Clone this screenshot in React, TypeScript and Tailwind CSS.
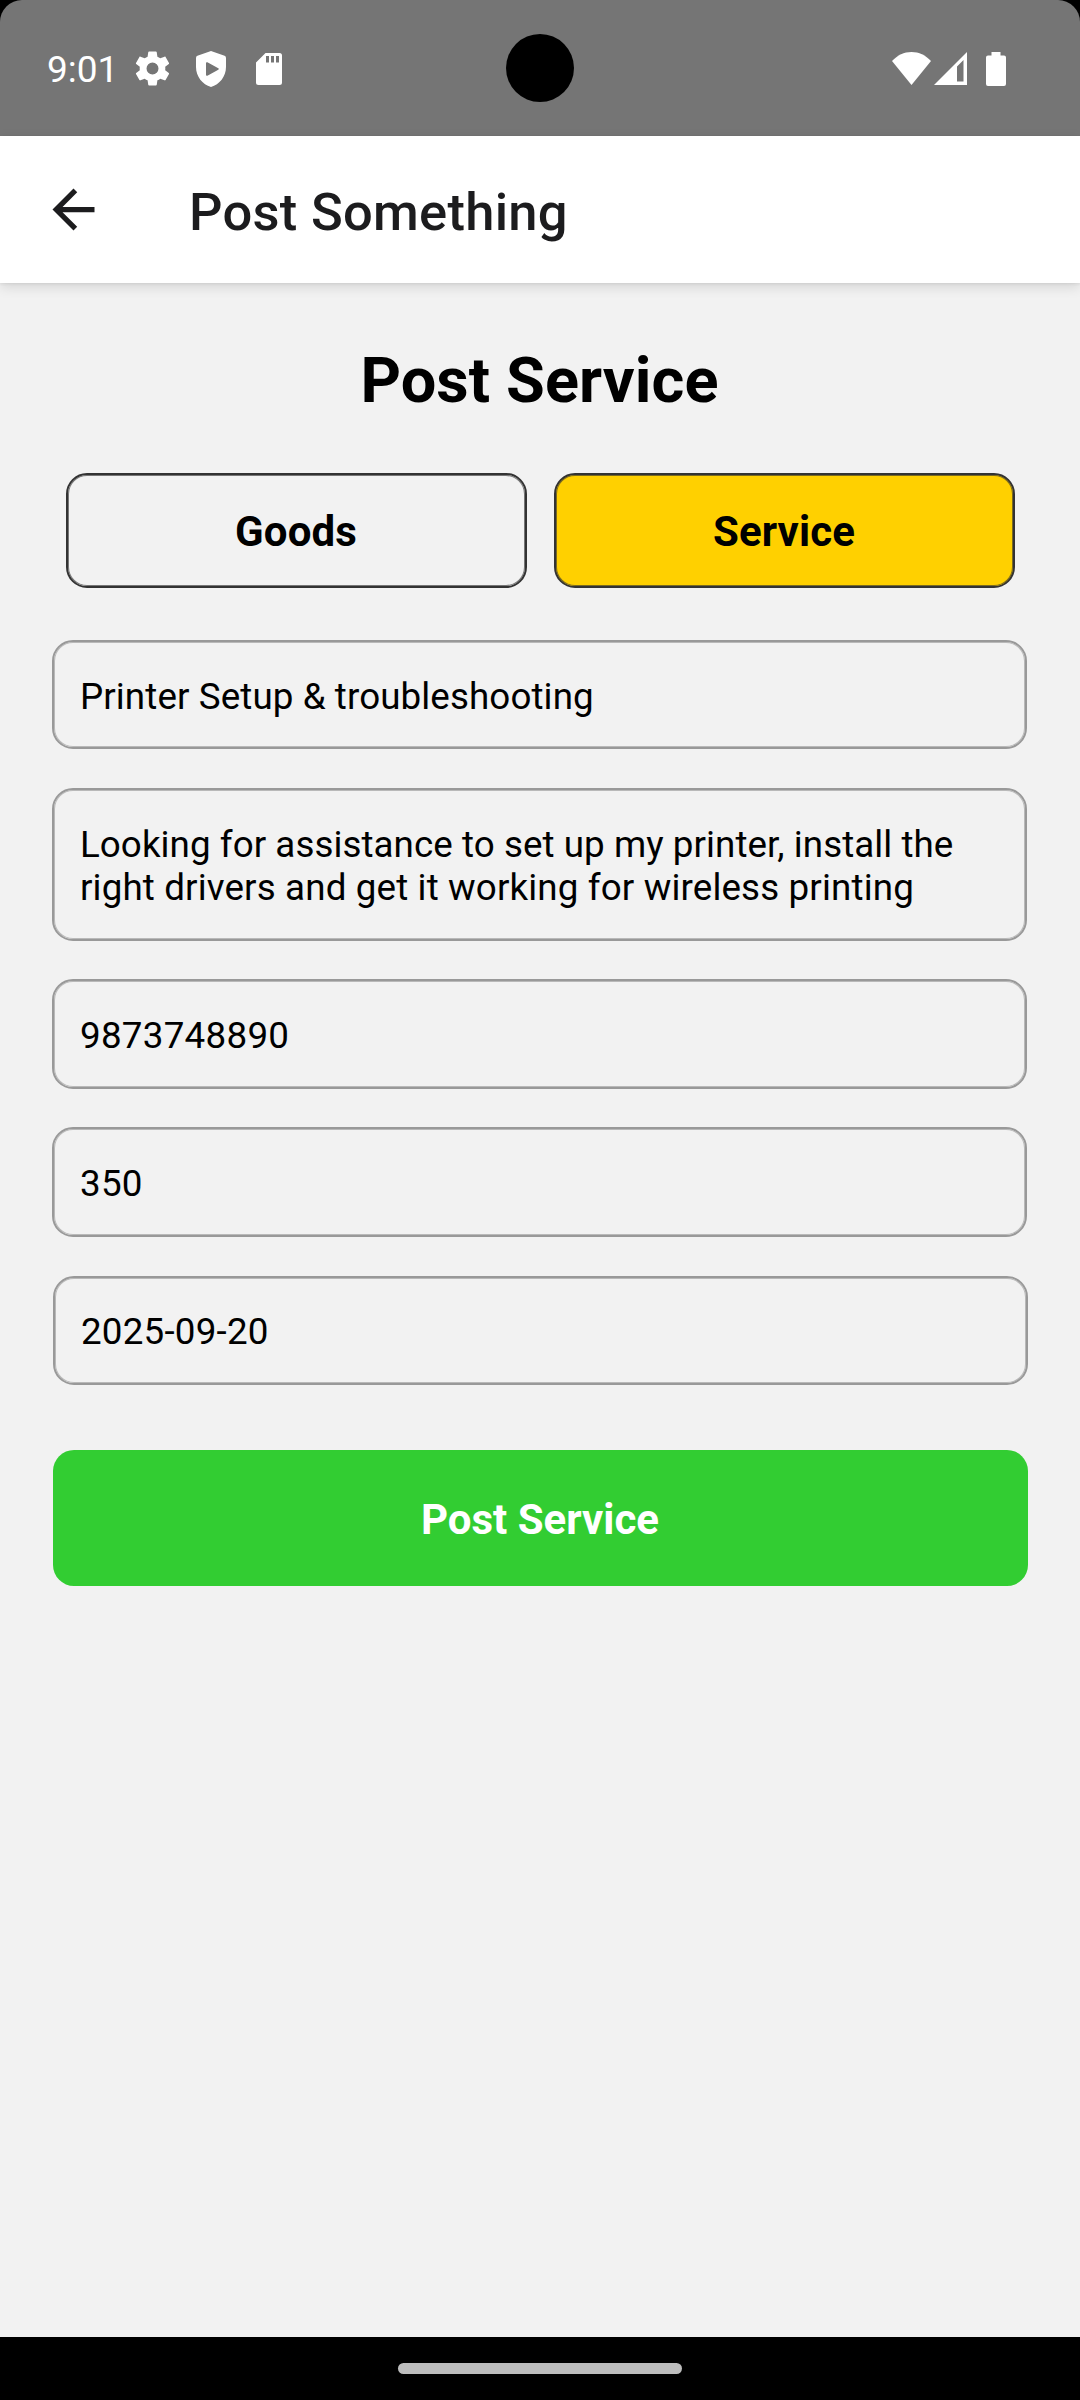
import React from "react";

function Field({ children, className = "" }: { children: React.ReactNode; className?: string }) {
  return (
    <div
      className={
        "flex w-[975px] items-center rounded-[21px] border-2 border-[#999] pl-[26px] text-[36.75px] leading-[43px] text-black shadow-[inset_0_0_0_1px_rgba(153,153,153,0.65)] " +
        className
      }
    >
      {children}
    </div>
  );
}

function Tab({ label, active = false }: { label: string; active?: boolean }) {
  return (
    <button
      className={
        "flex h-[115px] w-[461px] items-center justify-center rounded-[21px] border-2 border-[#333] pt-[2px] pr-[1px] text-[42px] font-bold tracking-[0.1px] text-black shadow-[inset_0_0_0_1px_rgba(51,51,51,0.65)] " +
        (active ? "bg-[#ffd000]" : "")
      }
    >
      {label}
    </button>
  );
}

function StatusBar() {
  return (
    <div className="shrink-0 bg-black">
      <header className="relative flex h-[136px] items-center rounded-t-[22px] bg-[#757575] pr-[74px] pl-[47px] pt-[1px] text-white">
        <span className="w-[85px] pt-[3px] text-[37px]">9:01</span>
        <svg className="h-[41px] w-[41px]" viewBox="0 0 24 24" fill="currentColor">
          <path d="M19.43 12.98c.04-.32.07-.64.07-.98s-.03-.66-.07-.98l2.11-1.65c.19-.15.24-.42.12-.64l-2-3.46c-.12-.22-.39-.3-.61-.22l-2.49 1c-.52-.4-1.08-.73-1.69-.98l-.38-2.65C14.46 2.18 14.25 2 14 2h-4c-.25 0-.46.18-.49.42l-.38 2.65c-.61.25-1.17.59-1.69.98l-2.49-1c-.23-.09-.49 0-.61.22l-2 3.46c-.13.22-.07.49.12.64l2.11 1.65c-.04.32-.07.65-.07.98s.03.66.07.98l-2.11 1.65c-.19.15-.24.42-.12.64l2 3.46c.12.22.39.3.61.22l2.49-1c.52.4 1.08.73 1.69.98l.38 2.65c.03.24.24.42.49.42h4c.25 0 .46-.18.49-.42l.38-2.65c.61-.25 1.17-.59 1.69-.98l2.49 1c.23.09.49 0 .61-.22l2-3.46c.12-.22.07-.49-.12-.64l-2.11-1.65zM12 15.5A3.5 3.5 0 1 1 12 8.5a3.5 3.5 0 0 1 0 7z" />
        </svg>
        <svg className="ml-[23px] h-[36px] w-[30px]" viewBox="0 0 30 36" fill="currentColor" fillRule="evenodd">
          <path d="M13.6.4Q15-.3 16.4.4L28.6 4.8Q30 5.4 30 7V16C30 25.5 23.5 33.5 15 36C6.500 33.5 0 25.5 0 16V7Q0 5.400 1.400 4.800ZM10 12.2V23.8Q10 25.300 11.400 24.700L22.300 18.700Q23.300 18 22.300 17.300L11.400 11.300Q10 10.700 10 12.200Z" />
        </svg>
        <svg className="ml-[30px] h-[32px] w-[26px]" viewBox="0 0 26 32" fill="currentColor" fillRule="evenodd">
          <path d="M9.500 0H23.500Q26 0 26 2.500V29.500Q26 32 23.500 32H2.500Q0 32 0 29.500V9.500ZM10 3V9.500H13V3ZM15 3V9.500H18V3ZM20 3V9.500H23V3Z" />
        </svg>
        <span className="absolute top-[34px] left-[506px] h-[68px] w-[68px] rounded-full bg-black" />
        <div className="ml-auto flex h-[34px] items-start">
          <svg className="h-[33px] w-[39px]" viewBox="0 0 39 33" fill="currentColor">
            <path d="M19.500 0C27 0 33.500 3.200 39 9L19.500 33L0 9C5.500 3.200 12 0 19.500 0Z" />
          </svg>
          <svg className="ml-[3px] h-[33px] w-[33px]" viewBox="0 0 33 33" fill="currentColor" fillRule="evenodd">
            <path d="M0 33L33 0V33ZM23 14.500V29.500H29.500V8Z" />
          </svg>
          <svg className="ml-[19px] h-[34px] w-[20px]" viewBox="0 0 20 34" fill="currentColor">
            <path d="M5.500 0H14.500V3.500H18Q20 3.500 20 5.500V32Q20 34 18 34H2Q0 34 0 32V5.500Q0 3.500 2 3.500H5.500Z" />
          </svg>
        </div>
      </header>
    </div>
  );
}

export default function App() {
  return (
    <div className="flex h-[2400px] w-[1080px] flex-col overflow-hidden bg-[#f2f2f2] font-['Roboto',sans-serif]">
      <StatusBar />
      <div className="relative z-10 flex h-[147px] shrink-0 items-center bg-white pl-[42px] text-[#1c1c1e] shadow-[0_4px_12px_rgba(0,0,0,0.12),0_1px_3px_rgba(0,0,0,0.07)]">
        <svg className="h-[63px] w-[63px]" viewBox="0 0 24 24" fill="currentColor">
          <path d="M20 11H7.830l5.590-5.590L12 4l-8 8 8 8 1.410-1.410L7.830 13H20v-2z" />
        </svg>
        <span className="ml-[84px] pt-[5px] text-[52.5px] font-medium tracking-[0.28px]">Post Something</span>
      </div>
      <main className="flex flex-1 flex-col pt-[61px] pl-[52px]">
        <h1 className="w-[975px] text-center text-[63px] leading-[74px] font-bold tracking-[0.1px] text-black">Post Service</h1>
        <div className="mt-[55px] flex gap-[27px] pl-[14px]">
          <Tab label="Goods" />
          <Tab label="Service" active />
        </div>
        <Field className="mt-[52px] h-[109px] pt-[3px] tracking-[0.1px]">Printer Setup &amp; troubleshooting</Field>
        <Field className="mt-[39px] h-[153px] pt-[3px]">
          <p>
            <span className="tracking-[0.06px]">Looking for assistance to set up my printer, install the</span>
            <br />
            <span className="tracking-[0.14px]">right drivers and get it working for wireless printing</span>
          </p>
        </Field>
        <Field className="mt-[38px] h-[110px] pt-[3px] tracking-[0.27px]">9873748890</Field>
        <Field className="mt-[38px] h-[110px] pt-[3px] tracking-[0.27px]">350</Field>
        <Field className="mt-[39px] ml-px h-[109px] pt-[2px] tracking-[0.22px]">2025-09-20</Field>
        <button className="mt-[65px] ml-px h-[136px] w-[975px] rounded-[21px] bg-[#32cd32] pt-[3px] pr-[1px] text-[42px] font-bold text-white">
          Post Service
        </button>
      </main>
      <footer className="flex h-[63px] shrink-0 justify-center bg-black pt-[26px]">
        <span className="h-[11px] w-[284px] rounded-full bg-[#bdbdbd]" />
      </footer>
    </div>
  );
}
